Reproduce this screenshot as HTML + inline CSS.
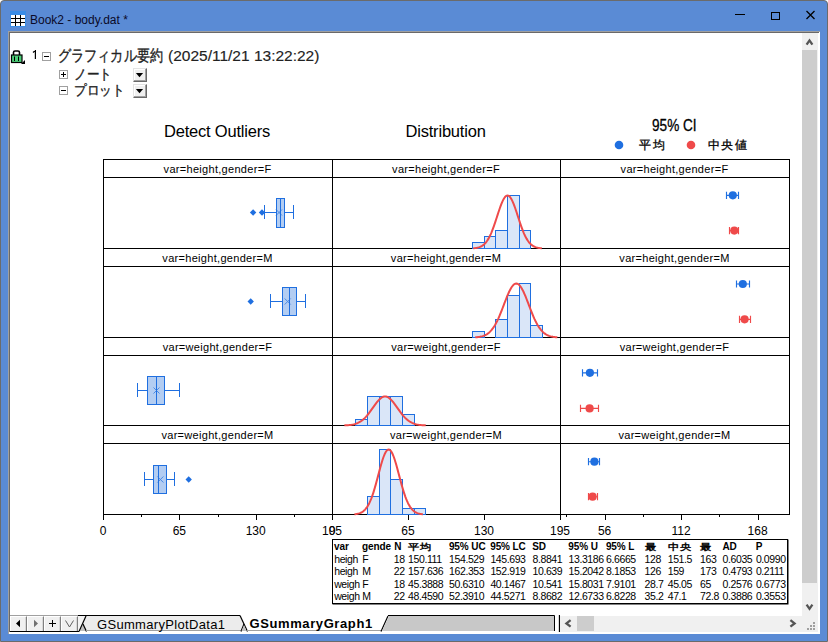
<!DOCTYPE html><html><head><meta charset="utf-8"><style>
*{margin:0;padding:0;box-sizing:border-box}
html,body{width:828px;height:642px;overflow:hidden;background:#fff}
body{position:relative;font-family:"Liberation Sans",sans-serif;color:#000}
.abs{position:absolute}
.t{position:absolute;white-space:nowrap;line-height:1}
</style></head><body>
<div class="abs" style="left:0;top:0;width:828px;height:642px;background:#5a8bd5;border:1px solid #6b6b6b;border-radius:4px 4px 0 0"></div>
<svg class="abs" style="left:10px;top:11px" width="16" height="16" viewBox="0 0 16 16"><rect x="0" y="0" width="16" height="16" fill="#3a8ce6"/><rect x="1" y="4" width="14" height="11" fill="#fff"/><path d="M1 7.5H15M1 11.5H15M5.5 4V15M10.5 4V15" stroke="#000" stroke-width="1"/></svg>
<div class="t" style="left:30px;top:14px;font-size:12px;color:#0a0a28">Book2 - body.dat *</div>
<div class="abs" style="left:735px;top:14px;width:10px;height:1px;background:#000"></div>
<div class="abs" style="left:771px;top:12px;width:9px;height:8px;border:1.2px solid #000"></div>
<svg class="abs" style="left:805px;top:10px" width="11" height="10" viewBox="0 0 11 10"><path d="M1.5 1L9.5 9M9.5 1L1.5 9" stroke="#000" stroke-width="1.3"/></svg>
<div class="abs" style="left:8px;top:31px;width:812px;height:603px;background:#fff;border-left:1px solid #a0a0a0;border-top:1px solid #a0a0a0"></div>
<div class="abs" style="left:9px;top:32px;width:810px;height:1px;background:#696969"></div>
<div class="abs" style="left:9px;top:32px;width:1px;height:600px;background:#696969"></div>
<div class="abs" style="left:802px;top:33px;width:16px;height:583px;background:#f0f0f0"></div>
<div class="abs" style="left:802px;top:50px;width:15px;height:533px;background:#cdcdcd"></div>
<svg class="abs" style="left:805px;top:38px" width="9" height="8"><path d="M1.6 6.6L4.5 2.4L7.4 6.6" stroke="#555" stroke-width="2.3" fill="none" stroke-linejoin="miter"/></svg>
<svg class="abs" style="left:805px;top:603px" width="9" height="8"><path d="M1.6 1.6L4.5 5.8L7.4 1.6" stroke="#555" stroke-width="2.3" fill="none" stroke-linejoin="miter"/></svg>
<div class="abs" style="left:560px;top:616px;width:258px;height:17px;background:#f0f0f0"></div>
<div class="abs" style="left:577px;top:616px;width:17px;height:15px;background:#cdcdcd"></div>
<svg class="abs" style="left:564px;top:619px" width="8" height="9"><path d="M6.6 1.1L2.4 4.4L6.6 7.7" stroke="#555" stroke-width="2.3" fill="none" stroke-linejoin="miter"/></svg>
<svg class="abs" style="left:789px;top:619px" width="8" height="9"><path d="M1.4 1.1L5.6 4.4L1.4 7.7" stroke="#555" stroke-width="2.3" fill="none" stroke-linejoin="miter"/></svg>
<div class="abs" style="left:813px;top:622px;width:2px;height:2px;background:#a0a0a0"></div>
<div class="abs" style="left:810px;top:625px;width:2px;height:2px;background:#a0a0a0"></div>
<div class="abs" style="left:813px;top:625px;width:2px;height:2px;background:#a0a0a0"></div>
<div class="abs" style="left:807px;top:628px;width:2px;height:2px;background:#a0a0a0"></div>
<div class="abs" style="left:810px;top:628px;width:2px;height:2px;background:#a0a0a0"></div>
<div class="abs" style="left:813px;top:628px;width:2px;height:2px;background:#a0a0a0"></div>
<div class="abs" style="left:10px;top:615px;width:68px;height:1px;background:#a0a0a0"></div>
<div class="abs" style="left:10px;top:631px;width:69px;height:1px;background:#000"></div>
<div class="abs" style="left:10px;top:632px;width:809px;height:2px;background:#fff"></div>
<div class="abs" style="left:10px;top:616px;width:17px;height:15px;background:#f0f0f0;border-left:1px solid #fff;border-top:1px solid #fff;border-right:1px solid #808080;box-shadow:inset -1px 0 0 #d8d8d8"></div>
<div class="abs" style="left:27px;top:616px;width:17px;height:15px;background:#f0f0f0;border-left:1px solid #fff;border-top:1px solid #fff;border-right:1px solid #808080;box-shadow:inset -1px 0 0 #d8d8d8"></div>
<div class="abs" style="left:44px;top:616px;width:17px;height:15px;background:#f0f0f0;border-left:1px solid #fff;border-top:1px solid #fff;border-right:1px solid #808080;box-shadow:inset -1px 0 0 #d8d8d8"></div>
<div class="abs" style="left:61px;top:616px;width:17px;height:15px;background:#f0f0f0;border-left:1px solid #fff;border-top:1px solid #fff;border-right:1px solid #808080;box-shadow:inset -1px 0 0 #d8d8d8"></div>
<svg class="abs" style="left:15px;top:619px" width="6" height="9"><path d="M5 0.7V8.3L1 4.5Z" fill="#000"/></svg>
<svg class="abs" style="left:33px;top:619px" width="6" height="9"><path d="M1 0.7V8.3L5 4.5Z" fill="#707070"/></svg>
<svg class="abs" style="left:48px;top:619px" width="9" height="9"><path d="M4.5 1V8M1 4.5H8" stroke="#000" stroke-width="1"/></svg>
<svg class="abs" style="left:65px;top:620px" width="9" height="8"><path d="M0.5 0.5L4.5 7L8.5 0.5" stroke="#606060" stroke-width="1" fill="none"/></svg>
<svg class="abs" style="left:78px;top:614px" width="482" height="20" viewBox="78 614 482 20"><path d="M78 616H86L79 631H78Z" fill="#f4f4f4"/><path d="M86 616H240L247 631H80Z" fill="#ececec"/><path d="M80 631L83 624L86.5 631Z" fill="#c0c0c0"/><path d="M78 615.5H240" stroke="#000" stroke-width="1"/><path d="M79 631.5L86 616" stroke="#000" stroke-width="1.2"/><path d="M83 624L86.5 631.5" stroke="#000" stroke-width="1.2"/><path d="M86 630.5H241" stroke="#a0a0a0" stroke-width="1"/><path d="M240 615.5L247.5 631.5" stroke="#000" stroke-width="1.2"/><path d="M244 624L241 631.5" stroke="#000" stroke-width="1.2"/><path d="M241.5 631L244 625L246.5 631Z" fill="#c0c0c0"/><path d="M247 630.5H381" stroke="#a0a0a0" stroke-width="1"/><path d="M381 631.5L388 616" stroke="#000" stroke-width="1.2"/><path d="M382 631L389 616H554V631Z" fill="#c8c8c8"/><path d="M388 615.5H554.5V631" stroke="#000" stroke-width="1" fill="none"/><path d="M559.5 615V632" stroke="#000" stroke-width="1.3"/></svg>
<div class="t" style="left:97px;top:617.5px;font-size:13px;color:#000;letter-spacing:0.32px">GSummaryPlotData1</div>
<div class="t" style="left:249.5px;top:617px;font-size:13px;font-weight:bold;color:#000;letter-spacing:0.6px">GSummaryGraph1</div>
<svg class="abs" style="left:10px;top:50px" width="16" height="14" viewBox="0 0 16 14"><path d="M3.5 5V2.5Q3.5 1 5 1H8Q9.5 1 9.5 2.5V5" stroke="#000" stroke-width="1.6" fill="#fff"/><rect x="1.5" y="5" width="10.5" height="7.5" fill="#4ccf78" stroke="#000" stroke-width="1.2"/><path d="M4.5 6.5V11M8.5 6.5V11" stroke="#000" stroke-width="1"/><path d="M11 14L15 14L15 10Z" fill="#000"/></svg>
<svg class="abs" style="left:32px;top:49px" width="5" height="11"><path d="M3.4 1V10M3.4 1.5L1 3.5" stroke="#000" stroke-width="1.2" fill="none"/></svg>
<svg class="abs" style="left:42px;top:52px" width="9" height="9" viewBox="0 0 9 9"><rect x="0.5" y="0.5" width="8" height="8" fill="#fff" stroke="#a0a0a0"/><path d="M2 4.5H7" stroke="#000"/></svg>
<svg class="abs" style="left:59px;top:70px" width="9" height="9" viewBox="0 0 9 9"><rect x="0.5" y="0.5" width="8" height="8" fill="#fff" stroke="#a0a0a0"/><path d="M2 4.5H7" stroke="#000"/><path d="M4.5 2V7" stroke="#000"/></svg>
<svg class="abs" style="left:59px;top:86px" width="9" height="9" viewBox="0 0 9 9"><rect x="0.5" y="0.5" width="8" height="8" fill="#fff" stroke="#a0a0a0"/><path d="M2 4.5H7" stroke="#000"/></svg>
<div class="t" style="left:58px;top:48px;font-size:15.5px;color:#222;-webkit-text-stroke:0.35px #222;transform:scaleX(0.82);transform-origin:0 0">グラフィカル要約</div>
<div class="t" style="left:168px;top:48px;font-size:15.5px;color:#222;-webkit-text-stroke:0.15px #222">(2025/11/21 13:22:22)</div>
<div class="t" style="left:74px;top:67.5px;font-size:13.5px;color:#222;-webkit-text-stroke:0.35px #222;transform:scaleX(0.9);transform-origin:0 0">ノート</div>
<div class="t" style="left:74px;top:83.5px;font-size:13.5px;color:#222;-webkit-text-stroke:0.35px #222;transform:scaleX(0.9);transform-origin:0 0">プロット</div>
<div class="abs" style="left:133px;top:68px;width:14px;height:14px;background:#f0f0f0;border-left:1px solid #e3e3e3;border-top:1px solid #e3e3e3;border-right:1px solid #696969;border-bottom:1px solid #696969;box-shadow:inset -1px -1px 0 #a0a0a0, inset 1px 1px 0 #fff"></div><svg class="abs" style="left:135px;top:73px" width="9" height="5"><path d="M0.9 0H8.1L4.5 4.2Z" fill="#000"/></svg>
<div class="abs" style="left:133px;top:84px;width:14px;height:14px;background:#f0f0f0;border-left:1px solid #e3e3e3;border-top:1px solid #e3e3e3;border-right:1px solid #696969;border-bottom:1px solid #696969;box-shadow:inset -1px -1px 0 #a0a0a0, inset 1px 1px 0 #fff"></div><svg class="abs" style="left:135px;top:89px" width="9" height="5"><path d="M0.9 0H8.1L4.5 4.2Z" fill="#000"/></svg>
<svg class="abs" style="left:0;top:0" width="828" height="642" viewBox="0 0 828 642"><g stroke="#000" stroke-width="1" fill="none" shape-rendering="crispEdges"><path d="M103.5 159V515"/><path d="M332.5 159V515"/><path d="M560.5 159V515"/><path d="M789.5 159V515"/><path d="M103 159.5H790"/><path d="M103 177.5H790"/><path d="M103 248.5H790"/><path d="M103 266.5H790"/><path d="M103 337.5H790"/><path d="M103 355.5H790"/><path d="M103 425.5H790"/><path d="M103 443.5H790"/><path d="M103 514.5H790"/><path d="M103.5 514V520"/><path d="M141.5 514V517"/><path d="M179.5 514V520"/><path d="M218.5 514V517"/><path d="M256.5 514V520"/><path d="M294.5 514V517"/><path d="M332.5 514V520"/><path d="M332.5 514V520"/><path d="M408.5 514V520"/><path d="M484.5 514V520"/><path d="M560.5 514V520"/><path d="M566.5 514V517"/><path d="M605.5 514V520"/><path d="M643.5 514V517"/><path d="M681.5 514V520"/><path d="M719.5 514V517"/><path d="M758.5 514V520"/></g><g stroke="#1f6fe0" stroke-width="1" fill="none" shape-rendering="crispEdges"><path d="M264 212.5H276M285 212.5H293M264.5 205V219M293.5 205V219"/><rect x="276.5" y="198.5" width="8" height="29" fill="#b3cdf2"/><path d="M280.5 198V228"/></g><path d="M276 209.5L282 215.5M282 209.5L276 215.5" stroke="#1f6fe0" stroke-width="1" opacity="0.7"/><path d="M253.1 209.3L256.3 212.5L253.1 215.7L249.9 212.5Z" fill="#1f6fe0"/><path d="M262 209.3L265.2 212.5L262 215.7L258.8 212.5Z" fill="#1f6fe0"/><g stroke="#1f6fe0" stroke-width="1" fill="none" shape-rendering="crispEdges"><path d="M270 301.5H282M297 301.5H305M270.5 294V308M305.5 294V308"/><rect x="282.5" y="287.5" width="14" height="28" fill="#b3cdf2"/><path d="M289.5 287V316"/></g><path d="M284.7 298.5L290.7 304.5M290.7 298.5L284.7 304.5" stroke="#1f6fe0" stroke-width="1" opacity="0.7"/><path d="M250.7 298.3L253.89999999999998 301.5L250.7 304.7L247.5 301.5Z" fill="#1f6fe0"/><g stroke="#1f6fe0" stroke-width="1" fill="none" shape-rendering="crispEdges"><path d="M137 390.5H147M165 390.5H179M137.5 383V397M179.5 383V397"/><rect x="147.5" y="376.5" width="17" height="28" fill="#b3cdf2"/><path d="M156.5 376V405"/></g><path d="M153.5 387.5L159.5 393.5M159.5 387.5L153.5 393.5" stroke="#1f6fe0" stroke-width="1" opacity="0.7"/><g stroke="#1f6fe0" stroke-width="1" fill="none" shape-rendering="crispEdges"><path d="M144 479.5H153M167 479.5H174M144.5 472V486M174.5 472V486"/><rect x="153.5" y="465.5" width="13" height="28" fill="#b3cdf2"/><path d="M158.5 465V494"/></g><path d="M157.4 476.5L163.4 482.5M163.4 476.5L157.4 482.5" stroke="#1f6fe0" stroke-width="1" opacity="0.7"/><path d="M188.7 476.3L191.89999999999998 479.5L188.7 482.7L185.5 479.5Z" fill="#1f6fe0"/><g stroke="#1f6fe0" stroke-width="1" fill="#dae6f8" shape-rendering="crispEdges"><rect x="472.5" y="242.5" width="12" height="6"/><rect x="484.5" y="236.5" width="11" height="12"/><rect x="495.5" y="230.5" width="12" height="18"/><rect x="507.5" y="195.5" width="12" height="53"/><rect x="519.5" y="230.5" width="11" height="18"/></g><polyline points="473.24,248.27 474.00,248.21 474.76,248.13 475.52,248.04 476.28,247.92 477.04,247.78 477.81,247.61 478.57,247.41 479.33,247.16 480.09,246.88 480.85,246.53 481.61,246.13 482.38,245.66 483.14,245.12 483.90,244.50 484.66,243.79 485.42,242.98 486.19,242.06 486.95,241.04 487.71,239.89 488.47,238.63 489.23,237.24 489.99,235.72 490.76,234.08 491.52,232.31 492.28,230.42 493.04,228.42 493.80,226.32 494.56,224.13 495.33,221.87 496.09,219.56 496.85,217.21 497.61,214.85 498.37,212.52 499.14,210.22 499.90,208.00 500.66,205.87 501.42,203.88 502.18,202.04 502.94,200.39 503.71,198.95 504.47,197.73 505.23,196.77 505.99,196.07 506.75,195.64 507.51,195.50 508.28,195.64 509.04,196.07 509.80,196.77 510.56,197.73 511.32,198.95 512.08,200.39 512.85,202.04 513.61,203.88 514.37,205.87 515.13,208.00 515.89,210.22 516.66,212.52 517.42,214.85 518.18,217.21 518.94,219.56 519.70,221.87 520.46,224.13 521.23,226.32 521.99,228.42 522.75,230.42 523.51,232.31 524.27,234.08 525.03,235.72 525.80,237.24 526.56,238.63 527.32,239.89 528.08,241.04 528.84,242.06 529.61,242.98 530.37,243.79 531.13,244.50 531.89,245.12 532.65,245.66 533.41,246.13 534.18,246.53 534.94,246.88 535.70,247.16 536.46,247.41 537.22,247.61 537.98,247.78 538.75,247.92 539.51,248.04 540.27,248.13 541.03,248.21 541.79,248.27" fill="none" stroke="#ef4a4a" stroke-width="2"/><g stroke="#1f6fe0" stroke-width="1" fill="#dae6f8" shape-rendering="crispEdges"><rect x="472.5" y="331.5" width="12" height="6"/><rect x="495.5" y="319.5" width="12" height="18"/><rect x="507.5" y="295.5" width="12" height="42"/><rect x="519.5" y="283.5" width="11" height="54"/><rect x="530.5" y="325.5" width="12" height="12"/></g><polyline points="475.26,337.27 476.17,337.20 477.09,337.13 478.00,337.03 478.91,336.91 479.82,336.77 480.74,336.60 481.65,336.39 482.56,336.14 483.47,335.84 484.38,335.50 485.30,335.09 486.21,334.61 487.12,334.06 488.03,333.42 488.95,332.70 489.86,331.87 490.77,330.94 491.68,329.90 492.59,328.73 493.51,327.44 494.42,326.02 495.33,324.48 496.24,322.80 497.16,321.00 498.07,319.08 498.98,317.04 499.89,314.90 500.81,312.67 501.72,310.37 502.63,308.01 503.54,305.62 504.45,303.22 505.37,300.84 506.28,298.50 507.19,296.23 508.10,294.07 509.02,292.04 509.93,290.17 510.84,288.48 511.75,287.01 512.66,285.77 513.58,284.79 514.49,284.08 515.40,283.65 516.31,283.50 517.23,283.65 518.14,284.08 519.05,284.79 519.96,285.77 520.87,287.01 521.79,288.48 522.70,290.17 523.61,292.04 524.52,294.07 525.44,296.23 526.35,298.50 527.26,300.84 528.17,303.22 529.08,305.62 530.00,308.01 530.91,310.37 531.82,312.67 532.73,314.90 533.65,317.04 534.56,319.08 535.47,321.00 536.38,322.80 537.29,324.48 538.21,326.02 539.12,327.44 540.03,328.73 540.94,329.90 541.86,330.94 542.77,331.87 543.68,332.70 544.59,333.42 545.50,334.06 546.42,334.61 547.33,335.09 548.24,335.50 549.15,335.84 550.07,336.14 550.98,336.39 551.89,336.60 552.80,336.77 553.71,336.91 554.63,337.03 555.54,337.13 556.45,337.20 557.36,337.27" fill="none" stroke="#ef4a4a" stroke-width="2"/><g stroke="#1f6fe0" stroke-width="1" fill="#dae6f8" shape-rendering="crispEdges"><rect x="355.5" y="419.5" width="12" height="6"/><rect x="367.5" y="396.5" width="12" height="29"/><rect x="379.5" y="396.5" width="11" height="29"/><rect x="390.5" y="396.5" width="12" height="29"/><rect x="402.5" y="414.5" width="12" height="11"/></g><polyline points="344.40,425.37 345.30,425.34 346.21,425.30 347.11,425.25 348.01,425.18 348.92,425.11 349.82,425.01 350.72,424.90 351.63,424.77 352.53,424.61 353.44,424.42 354.34,424.20 355.24,423.95 356.15,423.65 357.05,423.31 357.96,422.92 358.86,422.48 359.76,421.98 360.67,421.42 361.57,420.79 362.47,420.10 363.38,419.34 364.28,418.51 365.19,417.61 366.09,416.64 366.99,415.61 367.90,414.51 368.80,413.36 369.70,412.17 370.61,410.93 371.51,409.66 372.42,408.38 373.32,407.09 374.22,405.81 375.13,404.55 376.03,403.34 376.94,402.18 377.84,401.08 378.74,400.08 379.65,399.18 380.55,398.39 381.45,397.72 382.36,397.19 383.26,396.81 384.17,396.58 385.07,396.50 385.97,396.58 386.88,396.81 387.78,397.19 388.69,397.72 389.59,398.39 390.49,399.18 391.40,400.08 392.30,401.08 393.20,402.18 394.11,403.34 395.01,404.55 395.92,405.81 396.82,407.09 397.72,408.38 398.63,409.66 399.53,410.93 400.43,412.17 401.34,413.36 402.24,414.51 403.15,415.61 404.05,416.64 404.95,417.61 405.86,418.51 406.76,419.34 407.67,420.10 408.57,420.79 409.47,421.42 410.38,421.98 411.28,422.48 412.18,422.92 413.09,423.31 413.99,423.65 414.90,423.95 415.80,424.20 416.70,424.42 417.61,424.61 418.51,424.77 419.42,424.90 420.32,425.01 421.22,425.11 422.13,425.18 423.03,425.25 423.93,425.30 424.84,425.34 425.74,425.37" fill="none" stroke="#ef4a4a" stroke-width="2"/><g stroke="#1f6fe0" stroke-width="1" fill="#dae6f8" shape-rendering="crispEdges"><rect x="367.5" y="496.5" width="12" height="18"/><rect x="379.5" y="449.5" width="11" height="65"/><rect x="390.5" y="479.5" width="12" height="35"/><rect x="402.5" y="508.5" width="12" height="6"/><rect x="414.5" y="508.5" width="11" height="6"/></g><polyline points="354.44,514.22 355.20,514.14 355.96,514.05 356.72,513.93 357.48,513.79 358.24,513.62 359.00,513.41 359.76,513.16 360.53,512.86 361.29,512.51 362.05,512.09 362.81,511.60 363.57,511.02 364.33,510.36 365.09,509.59 365.85,508.72 366.61,507.73 367.37,506.60 368.13,505.35 368.89,503.94 369.65,502.39 370.41,500.69 371.17,498.83 371.93,496.81 372.69,494.64 373.45,492.33 374.21,489.88 374.97,487.30 375.73,484.62 376.49,481.84 377.25,479.01 378.01,476.13 378.77,473.24 379.54,470.37 380.30,467.55 381.06,464.83 381.82,462.22 382.58,459.78 383.34,457.52 384.10,455.50 384.86,453.73 385.62,452.24 386.38,451.05 387.14,450.20 387.90,449.67 388.66,449.50 389.42,449.67 390.18,450.20 390.94,451.05 391.70,452.24 392.46,453.73 393.22,455.50 393.98,457.52 394.74,459.78 395.50,462.22 396.26,464.83 397.02,467.55 397.78,470.37 398.54,473.24 399.31,476.13 400.07,479.01 400.83,481.84 401.59,484.62 402.35,487.30 403.11,489.88 403.87,492.33 404.63,494.64 405.39,496.81 406.15,498.83 406.91,500.69 407.67,502.39 408.43,503.94 409.19,505.35 409.95,506.60 410.71,507.73 411.47,508.72 412.23,509.59 412.99,510.36 413.75,511.02 414.51,511.60 415.27,512.09 416.03,512.51 416.79,512.86 417.55,513.16 418.32,513.41 419.08,513.62 419.84,513.79 420.60,513.93 421.36,514.05 422.12,514.14 422.88,514.22" fill="none" stroke="#ef4a4a" stroke-width="2"/><g stroke="#1f6fe0" stroke-width="1.15" fill="none"><path d="M726.5 195.3H738.5M726.5 191.70000000000002V198.9M738.5 191.70000000000002V198.9"/></g><circle cx="732.8" cy="195.3" r="4.1" fill="#1f6fe0"/><g stroke="#ef4a4a" stroke-width="1.15" fill="none"><path d="M729.5 230.6H738.5M729.5 227.0V234.2M738.5 227.0V234.2"/></g><circle cx="734.3" cy="230.6" r="4.1" fill="#ef4a4a"/><g stroke="#1f6fe0" stroke-width="1.15" fill="none"><path d="M736.5 284.0H749.5M736.5 280.4V287.6M749.5 280.4V287.6"/></g><circle cx="742.8" cy="284.0" r="4.1" fill="#1f6fe0"/><g stroke="#ef4a4a" stroke-width="1.15" fill="none"><path d="M739.5 319.3H750.5M739.5 315.7V322.90000000000003M750.5 315.7V322.90000000000003"/></g><circle cx="744.6" cy="319.3" r="4.1" fill="#ef4a4a"/><g stroke="#1f6fe0" stroke-width="1.15" fill="none"><path d="M582.5 372.8H597.5M582.5 369.2V376.40000000000003M597.5 369.2V376.40000000000003"/></g><circle cx="589.9" cy="372.8" r="4.1" fill="#1f6fe0"/><g stroke="#ef4a4a" stroke-width="1.15" fill="none"><path d="M580.5 408.4H598.5M580.5 404.79999999999995V412.0M598.5 404.79999999999995V412.0"/></g><circle cx="589.6" cy="408.4" r="4.1" fill="#ef4a4a"/><g stroke="#1f6fe0" stroke-width="1.15" fill="none"><path d="M588.5 461.7H599.5M588.5 458.09999999999997V465.3M599.5 458.09999999999997V465.3"/></g><circle cx="594.4" cy="461.7" r="4.1" fill="#1f6fe0"/><g stroke="#ef4a4a" stroke-width="1.15" fill="none"><path d="M588.5 496.7H597.5M588.5 493.09999999999997V500.3M597.5 493.09999999999997V500.3"/></g><circle cx="592.6" cy="496.7" r="4.1" fill="#ef4a4a"/><circle cx="619" cy="145" r="4.3" fill="#1f6fe0"/><circle cx="691" cy="145" r="4.3" fill="#ef4a4a"/></svg>
<div class="t" style="left:164px;top:122.8px;font-size:16.5px;letter-spacing:-0.2px">Detect Outliers</div>
<div class="t" style="left:405.5px;top:122.8px;font-size:16.5px;letter-spacing:-0.2px">Distribution</div>
<div class="t" style="left:652px;top:118px;font-size:16px;-webkit-text-stroke:0.3px #000;transform:scaleX(0.85);transform-origin:0 0">95% CI</div>
<div class="t" style="left:639px;top:139.5px;font-size:11.5px;letter-spacing:2px;-webkit-text-stroke:0.3px #000">平均</div>
<div class="t" style="left:707.5px;top:139.5px;font-size:11.5px;letter-spacing:1.5px;-webkit-text-stroke:0.3px #000">中央値</div>
<div class="t" style="left:103px;top:163.7px;width:229px;text-align:center;font-size:11px;letter-spacing:0.3px">var=height,gender=F</div>
<div class="t" style="left:332px;top:163.7px;width:228px;text-align:center;font-size:11px;letter-spacing:0.3px">var=height,gender=F</div>
<div class="t" style="left:560px;top:163.7px;width:229px;text-align:center;font-size:11px;letter-spacing:0.3px">var=height,gender=F</div>
<div class="t" style="left:103px;top:252.7px;width:229px;text-align:center;font-size:11px;letter-spacing:0.3px">var=height,gender=M</div>
<div class="t" style="left:332px;top:252.7px;width:228px;text-align:center;font-size:11px;letter-spacing:0.3px">var=height,gender=M</div>
<div class="t" style="left:560px;top:252.7px;width:229px;text-align:center;font-size:11px;letter-spacing:0.3px">var=height,gender=M</div>
<div class="t" style="left:103px;top:341.7px;width:229px;text-align:center;font-size:11px;letter-spacing:0.3px">var=weight,gender=F</div>
<div class="t" style="left:332px;top:341.7px;width:228px;text-align:center;font-size:11px;letter-spacing:0.3px">var=weight,gender=F</div>
<div class="t" style="left:560px;top:341.7px;width:229px;text-align:center;font-size:11px;letter-spacing:0.3px">var=weight,gender=F</div>
<div class="t" style="left:103px;top:429.7px;width:229px;text-align:center;font-size:11px;letter-spacing:0.3px">var=weight,gender=M</div>
<div class="t" style="left:332px;top:429.7px;width:228px;text-align:center;font-size:11px;letter-spacing:0.3px">var=weight,gender=M</div>
<div class="t" style="left:560px;top:429.7px;width:229px;text-align:center;font-size:11px;letter-spacing:0.3px">var=weight,gender=M</div>
<div class="t" style="left:73.0px;top:525px;width:60px;text-align:center;font-size:12px">0</div>
<div class="t" style="left:149.33333333333334px;top:525px;width:60px;text-align:center;font-size:12px">65</div>
<div class="t" style="left:225.66666666666669px;top:525px;width:60px;text-align:center;font-size:12px">130</div>
<div class="t" style="left:302.0px;top:525px;width:60px;text-align:center;font-size:12px">195</div>
<div class="t" style="left:302.0px;top:525px;width:60px;text-align:center;font-size:12px">0</div>
<div class="t" style="left:378.0px;top:525px;width:60px;text-align:center;font-size:12px">65</div>
<div class="t" style="left:454.0px;top:525px;width:60px;text-align:center;font-size:12px">130</div>
<div class="t" style="left:530.0px;top:525px;width:60px;text-align:center;font-size:12px">195</div>
<div class="t" style="left:574.6px;top:525px;width:60px;text-align:center;font-size:12px">56</div>
<div class="t" style="left:651.1px;top:525px;width:60px;text-align:center;font-size:12px">112</div>
<div class="t" style="left:727.6px;top:525px;width:60px;text-align:center;font-size:12px">168</div>
<div class="abs" style="left:332px;top:539px;width:456px;height:65px;border:1px solid #000;border-width:1px 1px 1px 1px;box-shadow:0.5px 0.5px 0 #000"></div>
<div class="t" style="left:334.0px;top:541.53px;font-size:10px;font-weight:bold;letter-spacing:-0.1px;">var</div>
<div class="t" style="left:362.0px;top:541.53px;font-size:10px;font-weight:bold;letter-spacing:-0.1px;">gende</div>
<div class="t" style="left:394.2px;top:541.53px;font-size:10px;font-weight:bold;letter-spacing:-0.1px;">N</div>
<div class="t" style="left:408.09999999999997px;top:540.77px;font-size:11.5px;-webkit-text-stroke:0.5px #000;transform:scaleY(0.8);transform-origin:0 100%;">平均</div>
<div class="t" style="left:448.9px;top:541.53px;font-size:10px;font-weight:bold;letter-spacing:-0.1px;">95% UC</div>
<div class="t" style="left:490.2px;top:541.53px;font-size:10px;font-weight:bold;letter-spacing:-0.1px;">95% LC</div>
<div class="t" style="left:532.3px;top:541.53px;font-size:10px;font-weight:bold;letter-spacing:-0.1px;">SD</div>
<div class="t" style="left:568.3px;top:541.53px;font-size:10px;font-weight:bold;letter-spacing:-0.1px;">95% U</div>
<div class="t" style="left:605.9px;top:541.53px;font-size:10px;font-weight:bold;letter-spacing:-0.1px;">95% L</div>
<div class="t" style="left:644.6px;top:540.77px;font-size:11.5px;-webkit-text-stroke:0.5px #000;transform:scaleY(0.8);transform-origin:0 100%;">最</div>
<div class="t" style="left:667.7px;top:540.77px;font-size:11.5px;-webkit-text-stroke:0.5px #000;transform:scaleY(0.8);transform-origin:0 100%;">中央</div>
<div class="t" style="left:700.1px;top:540.77px;font-size:11.5px;-webkit-text-stroke:0.5px #000;transform:scaleY(0.8);transform-origin:0 100%;">最</div>
<div class="t" style="left:722.4px;top:541.53px;font-size:10px;font-weight:bold;letter-spacing:-0.1px;">AD</div>
<div class="t" style="left:755.7px;top:541.53px;font-size:10px;font-weight:bold;letter-spacing:-0.1px;">P</div>
<div class="t" style="left:334.2px;top:553.86px;font-size:10.5px;letter-spacing:-0.4px;">heigh</div>
<div class="t" style="left:362.2px;top:553.86px;font-size:10.5px;letter-spacing:-0.4px;">F</div>
<div class="t" style="left:384.7px;top:553.86px;font-size:10.5px;letter-spacing:-0.4px;width:20px;text-align:right;">18</div>
<div class="t" style="left:408.09999999999997px;top:553.86px;font-size:10.5px;letter-spacing:-0.4px;">150.111</div>
<div class="t" style="left:449.09999999999997px;top:553.86px;font-size:10.5px;letter-spacing:-0.4px;">154.529</div>
<div class="t" style="left:490.4px;top:553.86px;font-size:10.5px;letter-spacing:-0.4px;">145.693</div>
<div class="t" style="left:532.5px;top:553.86px;font-size:10.5px;letter-spacing:-0.4px;">8.8841</div>
<div class="t" style="left:568.5px;top:553.86px;font-size:10.5px;letter-spacing:-0.4px;">13.3186</div>
<div class="t" style="left:606.1px;top:553.86px;font-size:10.5px;letter-spacing:-0.4px;">6.6665</div>
<div class="t" style="left:644.6px;top:553.86px;font-size:10.5px;letter-spacing:-0.4px;">128</div>
<div class="t" style="left:667.7px;top:553.86px;font-size:10.5px;letter-spacing:-0.4px;">151.5</div>
<div class="t" style="left:700.1px;top:553.86px;font-size:10.5px;letter-spacing:-0.4px;">163</div>
<div class="t" style="left:722.6px;top:553.86px;font-size:10.5px;letter-spacing:-0.4px;">0.6035</div>
<div class="t" style="left:755.9000000000001px;top:553.86px;font-size:10.5px;letter-spacing:-0.4px;">0.0990</div>
<div class="t" style="left:334.2px;top:566.11px;font-size:10.5px;letter-spacing:-0.4px;">heigh</div>
<div class="t" style="left:362.2px;top:566.11px;font-size:10.5px;letter-spacing:-0.4px;">M</div>
<div class="t" style="left:384.7px;top:566.11px;font-size:10.5px;letter-spacing:-0.4px;width:20px;text-align:right;">22</div>
<div class="t" style="left:408.09999999999997px;top:566.11px;font-size:10.5px;letter-spacing:-0.4px;">157.636</div>
<div class="t" style="left:449.09999999999997px;top:566.11px;font-size:10.5px;letter-spacing:-0.4px;">162.353</div>
<div class="t" style="left:490.4px;top:566.11px;font-size:10.5px;letter-spacing:-0.4px;">152.919</div>
<div class="t" style="left:532.5px;top:566.11px;font-size:10.5px;letter-spacing:-0.4px;">10.639</div>
<div class="t" style="left:568.5px;top:566.11px;font-size:10.5px;letter-spacing:-0.4px;">15.2042</div>
<div class="t" style="left:606.1px;top:566.11px;font-size:10.5px;letter-spacing:-0.4px;">8.1853</div>
<div class="t" style="left:644.6px;top:566.11px;font-size:10.5px;letter-spacing:-0.4px;">126</div>
<div class="t" style="left:667.7px;top:566.11px;font-size:10.5px;letter-spacing:-0.4px;">159</div>
<div class="t" style="left:700.1px;top:566.11px;font-size:10.5px;letter-spacing:-0.4px;">173</div>
<div class="t" style="left:722.6px;top:566.11px;font-size:10.5px;letter-spacing:-0.4px;">0.4793</div>
<div class="t" style="left:755.9000000000001px;top:566.11px;font-size:10.5px;letter-spacing:-0.4px;">0.2111</div>
<div class="t" style="left:334.2px;top:578.61px;font-size:10.5px;letter-spacing:-0.4px;">weigh</div>
<div class="t" style="left:362.2px;top:578.61px;font-size:10.5px;letter-spacing:-0.4px;">F</div>
<div class="t" style="left:384.7px;top:578.61px;font-size:10.5px;letter-spacing:-0.4px;width:20px;text-align:right;">18</div>
<div class="t" style="left:408.09999999999997px;top:578.61px;font-size:10.5px;letter-spacing:-0.4px;">45.3888</div>
<div class="t" style="left:449.09999999999997px;top:578.61px;font-size:10.5px;letter-spacing:-0.4px;">50.6310</div>
<div class="t" style="left:490.4px;top:578.61px;font-size:10.5px;letter-spacing:-0.4px;">40.1467</div>
<div class="t" style="left:532.5px;top:578.61px;font-size:10.5px;letter-spacing:-0.4px;">10.541</div>
<div class="t" style="left:568.5px;top:578.61px;font-size:10.5px;letter-spacing:-0.4px;">15.8031</div>
<div class="t" style="left:606.1px;top:578.61px;font-size:10.5px;letter-spacing:-0.4px;">7.9101</div>
<div class="t" style="left:644.6px;top:578.61px;font-size:10.5px;letter-spacing:-0.4px;">28.7</div>
<div class="t" style="left:667.7px;top:578.61px;font-size:10.5px;letter-spacing:-0.4px;">45.05</div>
<div class="t" style="left:700.1px;top:578.61px;font-size:10.5px;letter-spacing:-0.4px;">65</div>
<div class="t" style="left:722.6px;top:578.61px;font-size:10.5px;letter-spacing:-0.4px;">0.2576</div>
<div class="t" style="left:755.9000000000001px;top:578.61px;font-size:10.5px;letter-spacing:-0.4px;">0.6773</div>
<div class="t" style="left:334.2px;top:590.86px;font-size:10.5px;letter-spacing:-0.4px;">weigh</div>
<div class="t" style="left:362.2px;top:590.86px;font-size:10.5px;letter-spacing:-0.4px;">M</div>
<div class="t" style="left:384.7px;top:590.86px;font-size:10.5px;letter-spacing:-0.4px;width:20px;text-align:right;">22</div>
<div class="t" style="left:408.09999999999997px;top:590.86px;font-size:10.5px;letter-spacing:-0.4px;">48.4590</div>
<div class="t" style="left:449.09999999999997px;top:590.86px;font-size:10.5px;letter-spacing:-0.4px;">52.3910</div>
<div class="t" style="left:490.4px;top:590.86px;font-size:10.5px;letter-spacing:-0.4px;">44.5271</div>
<div class="t" style="left:532.5px;top:590.86px;font-size:10.5px;letter-spacing:-0.4px;">8.8682</div>
<div class="t" style="left:568.5px;top:590.86px;font-size:10.5px;letter-spacing:-0.4px;">12.6733</div>
<div class="t" style="left:606.1px;top:590.86px;font-size:10.5px;letter-spacing:-0.4px;">6.8228</div>
<div class="t" style="left:644.6px;top:590.86px;font-size:10.5px;letter-spacing:-0.4px;">35.2</div>
<div class="t" style="left:667.7px;top:590.86px;font-size:10.5px;letter-spacing:-0.4px;">47.1</div>
<div class="t" style="left:700.1px;top:590.86px;font-size:10.5px;letter-spacing:-0.4px;">72.8</div>
<div class="t" style="left:722.6px;top:590.86px;font-size:10.5px;letter-spacing:-0.4px;">0.3886</div>
<div class="t" style="left:755.9000000000001px;top:590.86px;font-size:10.5px;letter-spacing:-0.4px;">0.3553</div>
</body></html>
